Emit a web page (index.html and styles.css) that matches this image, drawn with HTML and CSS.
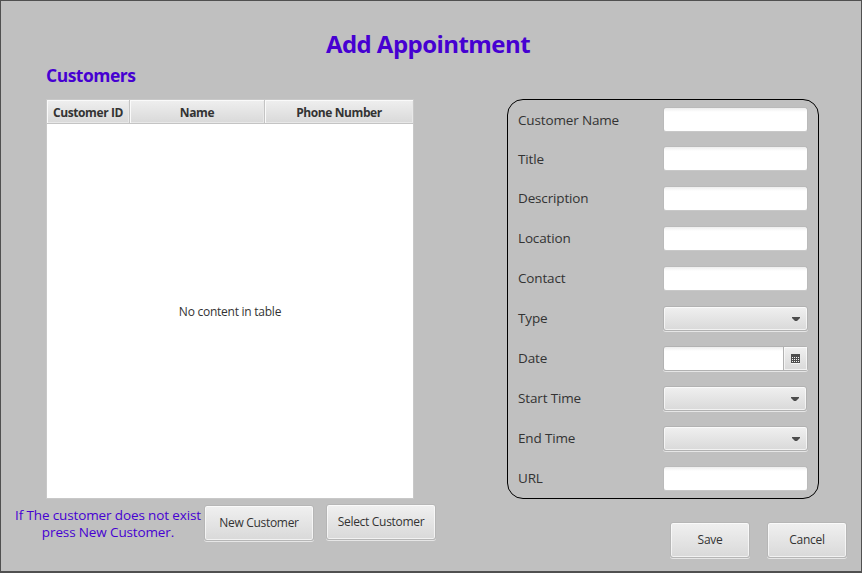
FILE: index.html
```html
<!DOCTYPE html>
<html lang="en">
<head>
<meta charset="utf-8">
<title>Add Appointment</title>
<link rel="stylesheet" href="styles.css">
</head>
<body>
<main class="window">
  <h1 class="title">Add Appointment</h1>
  <div class="columns">
    <section class="customers">
      <h2 class="subtitle">Customers</h2>
      <div class="table">
        <div class="table-head">
          <div class="th">Customer ID</div>
          <div class="th">Name</div>
          <div class="th">Phone Number</div>
        </div>
        <div class="table-body"><span>No content in table</span></div>
      </div>
      <div class="customer-actions">
        <p class="hint">If The customer does not exist<br>press New Customer.</p>
        <button class="button new">New Customer</button>
        <button class="button select">Select Customer</button>
      </div>
    </section>
    <section class="appointment">
      <form class="panel">
        <div class="row first"><label>Customer Name</label><input class="field"></div>
        <div class="row second"><label>Title</label><input class="field"></div>
        <div class="row"><label>Description</label><input class="field"></div>
        <div class="row"><label>Location</label><input class="field"></div>
        <div class="row"><label>Contact</label><input class="field"></div>
        <div class="row"><label>Type</label><div class="combo"><svg class="arrow" width="8" height="4" viewBox="0 0 8 4"><path d="M0 0H8V1L5 4H3L0 1Z"/></svg></div></div>
        <div class="row"><label>Date</label><div class="date"><input class="date-input"><div class="date-button"><svg width="9" height="10" viewBox="0 0 9 10" shape-rendering="crispEdges"><path fill="#4d4d4d" d="M0 0H9V9H0Z"/><path fill="#f4f4f4" d="M1 3h1v1H1zM3 3h1v1H3zM5 3h1v1H5zM7 3h1v1H7zM1 5h1v1H1zM3 5h1v1H3zM5 5h1v1H5zM7 5h1v1H7zM1 7h1v1H1zM3 7h1v1H3zM5 7h1v1H5zM7 7h1v1H7zM0 9h9v1H0z"/></svg></div></div></div>
        <div class="row"><label>Start Time</label><div class="combo short"><svg class="arrow" width="8" height="4" viewBox="0 0 8 4"><path d="M0 0H8V1L5 4H3L0 1Z"/></svg></div></div>
        <div class="row"><label>End Time</label><div class="combo"><svg class="arrow" width="8" height="4" viewBox="0 0 8 4"><path d="M0 0H8V1L5 4H3L0 1Z"/></svg></div></div>
        <div class="row"><label>URL</label><input class="field"></div>
      </form>
      <div class="form-actions">
        <button class="button">Save</button>
        <button class="button">Cancel</button>
      </div>
    </section>
  </div>
</main>
</body>
</html>
```

FILE: styles.css
```css
* { box-sizing: border-box; }
body {
  margin: 0;
  font-family: "Open Sans", "Noto Sans", sans-serif;
  color: #333;
}
h1, h2, p { margin: 0; }
.window {
  width: 862px;
  height: 573px;
  background: #c0c0c0;
  border: 1px solid #505050;
  border-bottom-width: 2px;
  overflow: hidden;
}
.title {
  width: 854px;
  height: 59px;
  padding-top: 26px;
  text-align: center;
  color: #4600d2;
  font-size: 24px;
  line-height: 34px;
  font-weight: 700;
  letter-spacing: -0.55px;
  white-space: nowrap;
}
.columns { display: flex; }
.customers { width: 506px; }
.subtitle {
  height: 39px;
  padding-left: 45px;
  color: #4600d2;
  font-size: 17.5px;
  line-height: 31px;
  font-weight: 700;
  letter-spacing: -0.5px;
}
.table {
  width: 368px;
  height: 400px;
  margin-left: 45px;
  border: 1px solid #c8c8c8;
  background: #fff;
  display: flex;
  flex-direction: column;
}
.table-head {
  height: 24px;
  display: grid;
  grid-template-columns: 83px 135px 148px;
  grid-template-rows: 23px;
  border-bottom: 1px solid #c4c4c4;
}
.th {
  background: linear-gradient(#efefef, #d9d9d9);
  box-shadow: inset 1px 1px #fafafa, inset -1px -1px #e8e8e8;
  border-right: 1px solid #c4c4c4;
  text-align: center;
  font-size: 12px;
  line-height: 25px;
  font-weight: 700;
  letter-spacing: -0.4px;
  white-space: nowrap;
}
.th:last-child { border-right: 0; }
.table-body {
  flex: 1;
  display: flex;
  align-items: center;
  justify-content: center;
  padding-top: 1px;
  font-size: 12px;
  letter-spacing: -0.25px;
}
.customer-actions {
  display: flex;
  align-items: flex-start;
  padding: 5px 0 0 12px;
}
.hint {
  width: 190px;
  padding-top: 3px;
  color: #4600d2;
  font-size: 13.5px;
  line-height: 17px;
  letter-spacing: -0.13px;
  text-align: center;
  white-space: nowrap;
}
.button {
  width: 110px;
  height: 36px;
  padding: 0 0 2px;
  flex: none;
  border: 1px solid #b6b6b6;
  border-radius: 3px;
  background: linear-gradient(#f0f0f0, #d9d9d9);
  box-shadow: inset 0 0 0 1px rgba(255, 255, 255, .65), 0 1px #e6e6e6;
  color: #333;
  font: 12px "Open Sans", "Noto Sans", sans-serif;
  letter-spacing: -0.3px;
  white-space: nowrap;
}
.new { margin: 1px 0 0 1px; }
.select { margin-left: 12px; padding-bottom: 1px; }
.panel {
  width: 312px;
  height: 400px;
  margin-top: 39px;
  padding: 7px 10px 0;
  border: 1px solid #000;
  border-radius: 16px;
}
.row {
  height: 40px;
  display: flex;
  align-items: flex-start;
  font-size: 13.5px;
}
.row.first { height: 39px; }
.row label {
  width: 145px;
  line-height: 25px;
  letter-spacing: -0.15px;
  white-space: nowrap;
}
.row.first label, .row.second label { line-height: 27px; }
.field, .date-input {
  width: 145px;
  height: 25px;
  margin: 0;
  border: 1px solid #bababa;
  border-bottom-color: #c8c8c8;
  border-radius: 3px;
  background: linear-gradient(#ededed, #fff 4px);
  outline: 0;
}
.combo, .date {
  width: 145px;
  height: 25px;
  border: 1px solid #b2b2b2;
  border-radius: 3px;
  box-shadow: 0 1px #e6e6e6;
  display: flex;
}
.combo {
  align-items: center;
  justify-content: flex-end;
  padding-right: 7px;
  background: linear-gradient(#f0f0f0, #d9d9d9);
  box-shadow: inset 0 0 0 1px rgba(255, 255, 255, .65), 0 1px #e6e6e6;
}
.combo.short { width: 144px; }
.arrow { fill: #4d4d4d; }
.date-input {
  width: 120px;
  height: 23px;
  border: 0;
  border-right: 1px solid #b2b2b2;
  border-radius: 2px 0 0 2px;
}
.date-button {
  flex: 1;
  display: flex;
  align-items: center;
  justify-content: center;
  background: linear-gradient(#f0f0f0, #d9d9d9);
  box-shadow: inset 0 0 0 1px rgba(255, 255, 255, .65);
}
.form-actions {
  display: flex;
  gap: 17px;
  padding: 23px 0 0 163px;
}
.form-actions .button { width: 80px; }
```
